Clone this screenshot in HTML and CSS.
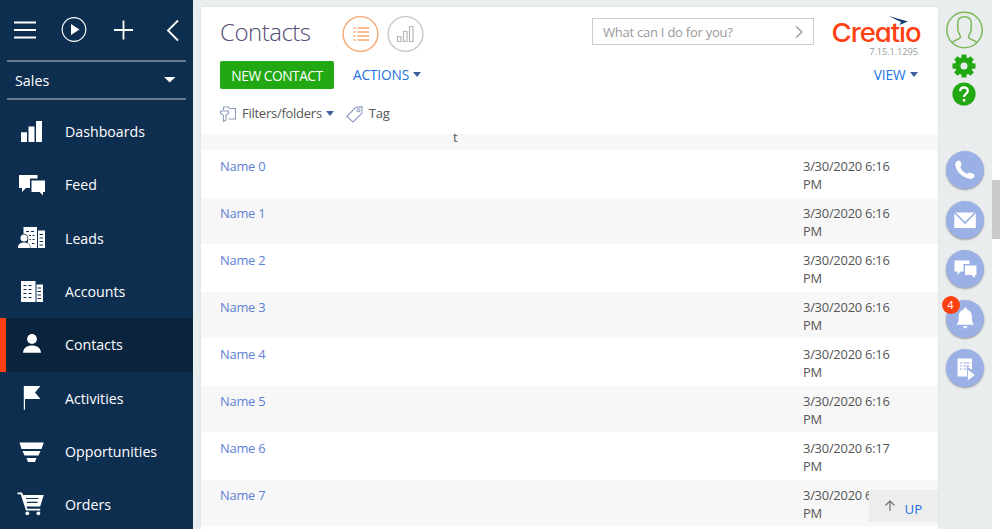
FILE: index.html
```html
<!DOCTYPE html>
<html lang="en">
<head>
<meta charset="utf-8">
<title>Contacts</title>
<link rel="stylesheet" href="styles.css">
</head>
<body>
<div class="app">
  <nav class="sidebar">
    <div class="tools">
      <svg width="193" height="60" viewBox="0 0 193 60" fill="none" stroke="#fff" stroke-width="2">
        <path d="M14 22.500h22M14 30h22M14 37.500h22"/>
        <circle cx="74" cy="29.500" r="11.800" stroke-width="1.200"/>
        <path d="M71 24v11l8.500-5.500z" fill="#fff" stroke="none"/>
        <path d="M114 30h19M123.500 20.500v19M178 20.500l-10 10 10 10" stroke-width="1.800"/>
      </svg>
    </div>
    <div class="workplace"><span>Sales</span><svg width="12" height="6"><path d="M0 0h11.500L5.700 5.500z" fill="#fff"/></svg></div>
    <ul class="menu">
      <li><svg viewBox="0 0 28 28"><path d="M3 14.300h6V24H3zM10.500 8.500h6V24h-6zM18 3h6v21h-6z"/></svg><span>Dashboards</span></li>
      <li><svg viewBox="0 0 28 28"><path d="M1 4h18.500v3.500H12V17H8l-4 4v-4H1zM13.500 9.500H27v11.500h-2v3.200L21.500 21h-8z"/></svg><span>Feed</span></li>
      <li><svg viewBox="0 0 28 28"><path d="M5.500 3h13.500v21h-6.500c0-2.500-1-4-3-5 2-4-.5-7.500-4-7.500zM20 6.500h7V24h-7z"/><circle cx="6" cy="14" r="4.300" fill="#0e2e50"/><circle cx="6" cy="14" r="3.500"/><path d="M0 24c0-4 2.500-5.500 6-5.500s6 1.500 6 5.500z"/><path class="cut" d="M8 7.500h3M13 7.500h3M11 11.500h2M14.500 11.500h2M11.500 15.500h1.500M14.500 15.500h2M14 19.500h2.500M21.500 10.500h3.500M21.500 14h3.500M21.500 17.500h3.500M21.500 21h3.500"/></svg><span>Leads</span></li>
      <li><svg viewBox="0 0 28 28"><path d="M3 3h14.500v21H3zM18.500 6.500H25V24h-6.500z"/><path class="cut" d="M5.500 7.500h3M10.500 7.500h3M5.500 11.500h3M10.500 11.500h3M5.500 15.500h3M10.500 15.500h3M5.500 19.500h3M10.500 19.500h3M19.500 10H23M19.500 13.500H23M19.500 17H23M19.500 20.500H23"/></svg><span>Accounts</span></li>
      <li class="active"><svg viewBox="0 0 28 28"><circle cx="14" cy="8" r="4.900"/><path d="M5 21.800c.5-5 4-7.300 9-7.300s8.500 2.300 9 7.300z"/></svg><span>Contacts</span></li>
      <li><svg viewBox="0 0 28 28"><path d="M5.800 2H22.500L17 8.500l5.500 6.500H7v10.800H5.800z"/></svg><span>Activities</span></li>
      <li><svg viewBox="0 0 28 28"><path d="M1.500 4.500h24.300L23.500 11h-20zM4.500 13h18l-2 4.500h-14zM8.500 20h10l-1.500 4h-7z"/></svg><span>Opportunities</span></li>
      <li><svg viewBox="0 0 28 28"><path d="M-.5 1.500H4L5.200 4H25.800L22.200 15.500H8.500l.8 2.200h12.900v1.800H8L2.700 3.200H-.5z"/><circle cx="9.300" cy="22.300" r="1.900"/><circle cx="20.400" cy="22.300" r="1.900"/><path class="cut" d="M8 7.500h12.500M9 11.300h10.500"/></svg><span>Orders</span></li>
    </ul>
  </nav>

  <main class="card">
    <header class="head">
      <div class="title-row">
        <h1>Contacts</h1>
        <svg class="modes" width="84" height="38" viewBox="0 0 84 38" fill="none">
          <circle cx="18.500" cy="19" r="17.400" stroke="#f5a873" stroke-width="1.400"/>
          <path d="M15.500 13H27M15.500 17H27M15.500 21H27M15.500 25H27" stroke="#f7a56b" stroke-width="1.400"/>
          <path d="M11.500 13h2M11.500 17h2M11.500 21h2M11.500 25h2" stroke="#f7a56b" stroke-width="1.400"/>
          <circle cx="63.500" cy="19" r="17.400" stroke="#c8c8c8" stroke-width="1.400"/>
          <path d="M55.500 21.500H59v5h-3.500zM61.500 16.500H65v10h-3.500zM67.500 11.500H71v15h-3.500z" stroke="#b5b5b5" stroke-width="1.200"/>
        </svg>
        <div class="search"><span>What can I do for you?</span><svg width="9" height="14" fill="none" stroke="#999" stroke-width="1.300"><path d="M1 1.500l6 5.500-6 5.500"/></svg></div>
        <div class="brand">
          <svg width="92" height="32" viewBox="0 0 92 32">
            <text class="logo" x="0.500" y="27.500" textLength="89" lengthAdjust="spacingAndGlyphs">Creat&#305;o</text>
            <path d="M57.500 2l19.500 5.500-8.500 3.500 1.500-3z" fill="#123e70"/>
          </svg>
          <span class="version">7.15.1.1295</span>
        </div>
      </div>
      <div class="action-row">
        <button class="primary">NEW CONTACT</button>
        <span class="link actions">ACTIONS<i class="caret"></i></span>
        <span class="link view">VIEW<i class="caret"></i></span>
      </div>
      <div class="filter-row">
        <svg width="17" height="17" viewBox="0 0 17 17" fill="none" stroke="#8d9dc0" stroke-width="1.100"><path d="M3.500 4V1h5l1 1.500H15.500v10.500H8.500M.5 5h8v2L6 9.500v4.500l-2.500 1.500v-6L.5 7z"/></svg>
        <span class="filters">Filters/folders<i class="caret"></i></span>
        <svg width="18" height="17" viewBox="0 0 18 17" fill="none" stroke="#8d9dc0" stroke-width="1.100"><path d="M.8 10.500L9.500 1.500l6-.8.700.8-.500 6L7 16z"/><circle cx="12.500" cy="4.300" r="1.500"/></svg>
        <span class="tag">Tag</span>
      </div>
    </header>
    <div class="grid">
      <div class="row first"><span>t</span></div>
      <div class="row"><a>Name 0</a><span>3/30/2020 6:16 PM</span></div>
      <div class="row alt"><a>Name 1</a><span>3/30/2020 6:16 PM</span></div>
      <div class="row"><a>Name 2</a><span>3/30/2020 6:16 PM</span></div>
      <div class="row alt"><a>Name 3</a><span>3/30/2020 6:16 PM</span></div>
      <div class="row"><a>Name 4</a><span>3/30/2020 6:16 PM</span></div>
      <div class="row alt"><a>Name 5</a><span>3/30/2020 6:16 PM</span></div>
      <div class="row"><a>Name 6</a><span>3/30/2020 6:17 PM</span></div>
      <div class="row alt"><a>Name 7</a><span>3/30/2020 6:17 PM</span></div>
      <div class="row"></div>
    </div>
    <div class="up"><svg width="12" height="12" fill="none" stroke="#777" stroke-width="1.300"><path d="M6 11V1.500M1.500 5.500L6 1l4.500 4.500"/></svg><span>UP</span></div>
  </main>

  <aside class="rail">
    <svg class="avatar" width="38" height="38" viewBox="0 0 38 38" fill="none" stroke="#7db95c" stroke-width="1.500"><circle cx="18.500" cy="19" r="17.700"/><path d="M6 31.500c2-2.500 8.500-3 8.500-5.500 0-2-2.700-4-2.700-8V12c0-4 2.700-6.300 6.700-6.300s6.700 2.300 6.700 6.300v6c0 4-2.700 6-2.700 8 0 2.500 6.500 3 8.500 5.500"/></svg>
    <svg class="gear" width="24" height="24" viewBox="-12 -12 24 24"><g fill="#21a812"><circle r="8.800"/><path id="tooth" d="M-2.400-11.500h4.800l.6 5h-6z"/><use href="#tooth" transform="rotate(45)"/><use href="#tooth" transform="rotate(90)"/><use href="#tooth" transform="rotate(135)"/><use href="#tooth" transform="rotate(180)"/><use href="#tooth" transform="rotate(225)"/><use href="#tooth" transform="rotate(270)"/><use href="#tooth" transform="rotate(315)"/></g><circle r="3.500" fill="#e9eded"/></svg>
    <svg class="help" width="24" height="24" viewBox="0 0 24 24"><circle cx="12" cy="12" r="11.600" fill="#21a812"/><path d="M8.200 9.300c0-5 7.600-5 7.600-.5 0 3-3.800 3.200-3.800 6.200" fill="none" stroke="#fff" stroke-width="2.300"/><path d="M10.800 17h2.500v2.500h-2.500z" fill="#fff"/></svg>
    <div class="comm">
      <div class="bubble"><svg viewBox="0 0 38 38"><path d="M10.500 10.500c2-2 4-1 4.500 1.200.5 2 .8 3-.8 4.300 1.400 3.500 3.500 5.600 7 7 1.300-1.600 2.500-1.500 4.500-.8 2.700.8 3.800 2.600 1.800 4.600-1.500 1.500-4.500 1.500-7.500 0-5-2.300-7.800-5-9.800-9.500-1.200-2.700-1.200-5.300.3-6.800z"/></svg></div>
      <div class="bubble"><svg viewBox="0 0 38 38"><path d="M8.300 11.500h21.500V27H8.300z"/><path d="M8.500 11.500L19 22l10.500-10.500" fill="none" stroke="#9bb0e5" stroke-width="1.700"/></svg></div>
      <div class="bubble"><svg viewBox="0 0 38 38"><path d="M8.500 10.500h15V14h-6v7.500h-3l-3 3.500v-3.500h-3zM19 15.500h11.500V25H29v3L25.500 25H19z"/></svg></div>
      <div class="bubble"><svg viewBox="0 0 38 38"><path d="M17.700 9.500c0-2.600 3.200-2.600 3.200 0 4 1 5 4.300 5 8 0 4 .8 5.500 2.100 7.200H10.500c1.300-1.700 2.200-3.200 2.200-7.200 0-3.700 1-7 5-8zM17 26.300h4.500c-.3 2.800-4.200 2.800-4.500 0z"/></svg><b class="badge">4</b></div>
      <div class="bubble"><svg viewBox="0 0 38 38"><path d="M11.500 9.500H26V21l-5-3.500V27.500h-9.500z"/><path d="M21.500 20v12l8-6z" stroke="#9bb0e5" stroke-width=".8"/><path d="M14 14h2M17.500 14h6M14 17h2M17.500 17h6M14 20h2M17.500 20h3" stroke="#9bb0e5" stroke-width="1.200"/></svg></div>
    </div>
  </aside>
  <div class="scroll"><div class="thumb"></div></div>
</div>
</body>
</html>
```
FILE: styles.css
```css
* { box-sizing: border-box; }
body { margin: 0; overflow: hidden; font-family: "Open Sans", sans-serif; font-size: 13px; color: #555; }
svg { display: block; flex: none; }
.app { display: flex; width: 1000px; height: 529px; overflow: hidden; background: #e9eded; }

.sidebar { width: 193px; height: 529px; background: #0e2e50; color: #fff; flex: none; }
.tools { height: 60px; }
.workplace { margin: 0 7px; height: 40px; padding: 0 10px 0 8px; border-top: 2px solid #6b7b90; border-bottom: 2px solid #6b7b90; display: flex; align-items: center; justify-content: space-between; font-size: 14.300px; }
.menu { list-style: none; margin: 5.200px 0 0; padding: 0; }
.menu li { height: 53.300px; display: flex; align-items: center; gap: 19px; padding-left: 18px; font-size: 14.200px; }
.menu span { margin-top: -.500px; }
.menu svg { width: 28px; height: 28px; fill: #fff; overflow: visible; }
.menu .cut { stroke: #0e2e50; stroke-width: 1.200; fill: none; }
.menu .active { background: #0a243e; border-left: 6px solid #ff4013; padding-left: 12px; }

.card { position: relative; width: 736.500px; height: 522px; margin: 7px 0 0 8px; background: #fff; border-radius: 2px 2px 0 0; box-shadow: 0 0 2px #d5dada; overflow: hidden; flex: none; }
.head { height: 127px; padding-left: 19px; }
.title-row { display: flex; height: 54px; align-items: flex-start; }
h1 { margin: 6px 0 0; width: 121px; font-size: 24px; line-height: 38px; font-weight: 300; letter-spacing: -.500px; color: #534c75; }
.modes { margin: 8px 0 0 1px; }
.search { margin: 11px 0 0 166px; width: 222px; height: 27px; border: 1px solid #ccc; display: flex; align-items: center; justify-content: space-between; padding: 0 9px 0 10px; color: #999; font-size: 13px; letter-spacing: -.240px; }
.brand { margin: 7px 0 0 17px; width: 90px; }
.logo { font-family: Inter, sans-serif; font-feature-settings: "cv11"; font-size: 26px; font-weight: 500; letter-spacing: -1px; fill: #ff4013; }
.version { display: block; text-align: right; padding-right: 3px; font-size: 9.300px; line-height: 12px; margin-top: 0; letter-spacing: -.100px; color: #999; }
.action-row { display: flex; align-items: center; height: 28px; }
.primary { width: 114px; height: 28px; padding: 0; border: 0; border-radius: 2px; background: #21a812; color: #fff; font: 13.800px "Open Sans", sans-serif; letter-spacing: -.500px; }
.link { color: #2173e2; font-size: 13.700px; letter-spacing: -.150px; display: flex; align-items: center; }
.link { line-height: 18px; margin-top: -1px; }
.caret { display: inline-block; border: 4px solid transparent; border-top: 5px solid #3d619e; border-bottom: 0; margin-left: 4px; vertical-align: 2px; }
.actions { margin-left: 19px; }
.view { margin-left: auto; margin-right: 20px; }
.filter-row { display: flex; align-items: center; height: 17px; margin-top: 17px; letter-spacing: -.260px; }
.filter-row span { margin-top: -3px; }
.filter-row .filters { margin-left: 5px; margin-right: 12px; }
.filter-row .tag { margin-left: 5px; }

.row { display: grid; grid-template-columns: 583px 100px; padding: 7px 0 0 19px; height: 48px; font-size: 12.900px; letter-spacing: -.240px; line-height: 18px; }
.row a { color: #5e80d6; }
.row.alt { height: 46px; background: #f7f7f7; padding-top: 6px; }
.row.first { height: 16px; background: #f7f7f7; display: block; padding: 0 0 0 252px; line-height: 7px; }
.up { position: absolute; right: 0; bottom: 7px; width: 69px; height: 32px; background: #ededed; display: flex; align-items: center; padding-left: 15px; color: #2173e2; font-size: 13.300px; }
.up span { margin: 6px 0 0 9px; }

.rail { width: 54.500px; padding: 11px 0 0 8px; flex: none; }
.gear { margin: 5px 0 0 6.500px; }
.help { margin: 4px 0 0 6.500px; }
.comm { margin-top: 45px; display: flex; flex-direction: column; gap: 11.500px; }
.bubble { position: relative; width: 38px; height: 38px; border-radius: 50%; background: #9bb0e5; box-shadow: 0 1px 2px #999; fill: #fff; }
.badge { position: absolute; left: -4px; top: -4px; width: 18px; height: 18px; border-radius: 50%; background: #ff4013; color: #fff; font-size: 11px; font-weight: 400; line-height: 18px; text-align: center; }
.scroll { flex: 1; background: #fff; padding: 180px 0 0; }
.thumb { height: 59px; background: #c9c9c9; }
```
